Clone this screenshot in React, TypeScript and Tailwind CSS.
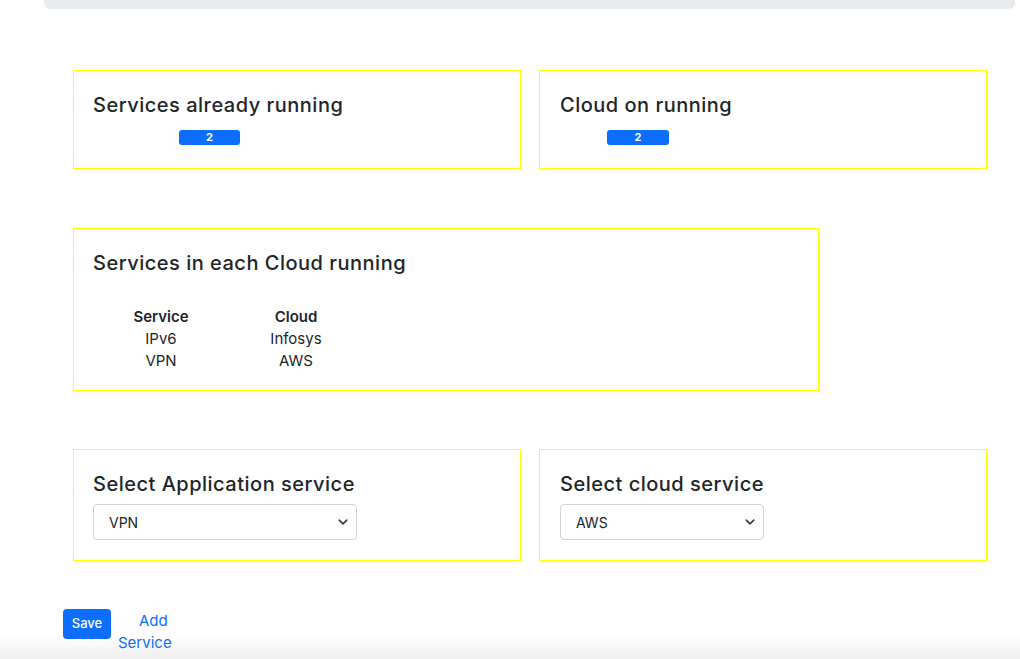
export default function App() {
  return (
    <div className="min-h-[659px] bg-[linear-gradient(to_bottom,#ffffff_636px,#efefef_659px)] font-['Inter','Liberation_Sans',sans-serif] text-[#212529]">
      <div className="ml-[44px] mr-[5px] h-[9px] rounded-b-[6px] bg-[#e9ecef]" />

      <div className="pl-[73px] pr-[33px] pt-[61px]">
        <div className="grid grid-cols-2 gap-[18px]">
          <div className="h-[99px] border border-[#ffff00] px-[19px] pt-[22px]">
            <h5 className="text-[20px] leading-[24px] font-medium tracking-[0.5px]">Services already running</h5>
            <div className="mt-[13px] ml-[86px] flex h-[15px] w-[61px] items-center justify-center rounded-[3px] bg-[#0d6efd] text-[11px] font-bold text-white">2</div>
          </div>
          <div className="h-[99px] border border-[#ffff00] px-[20px] pt-[22px]">
            <h5 className="text-[20px] leading-[24px] font-medium tracking-[0.5px]">Cloud on running</h5>
            <div className="mt-[13px] ml-[47px] flex h-[15px] w-[62px] items-center justify-center rounded-[3px] bg-[#0d6efd] text-[11px] font-bold text-white">2</div>
          </div>
        </div>

        <div className="mt-[59px] h-[163px] w-[746px] border border-[#ffff00] px-[19px] pt-[22px]">
          <h5 className="text-[20px] leading-[24px] font-medium tracking-[0.5px]">Services in each Cloud running</h5>
          <div className="mt-[31px] ml-[28px] grid grid-cols-[80px_190px] text-center text-[15px] leading-[22px]">
            <div className="font-semibold">Service</div>
            <div className="font-semibold">Cloud</div>
            <div>IPv6</div>
            <div>Infosys</div>
            <div>VPN</div>
            <div>AWS</div>
          </div>
        </div>

        <div className="mt-[58px] grid grid-cols-2 gap-[18px]">
          <div className="h-[112px] border border-[#ffff00] px-[19px] pt-[22px]">
            <h5 className="text-[20px] leading-[24px] font-medium tracking-[0.5px]">Select Application service</h5>
            <Select value="VPN" width="w-[264px]" />
          </div>
          <div className="h-[112px] border border-[#ffff00] px-[20px] pt-[22px]">
            <h5 className="text-[20px] leading-[24px] font-medium tracking-[0.5px]">Select cloud service</h5>
            <Select value="AWS" width="w-[204px]" />
          </div>
        </div>
      </div>

      <div className="mt-[48px] ml-[63px] flex items-start gap-[7px]">
        <button className="h-[30px] w-[48px] rounded-[4px] bg-[#0d6efd] text-[13px] font-medium text-white">Save</button>
        <a className="mt-[1px] block w-[52px] text-[15px] leading-[22px] text-[#0d6efd]">
          <span className="block pl-[21px]">Add</span>
          <span className="block">Service</span>
        </a>
      </div>
    </div>
  )
}

function Select({ value, width }: { value: string; width: string }) {
  return (
    <div className={`mt-[8px] flex h-[36px] items-center justify-between rounded-[4px] border border-[#ced4da] bg-white pl-[15px] pr-[8px] text-[14px] text-[#212529] ${width}`}>
      <span>{value}</span>
      <svg width="10" height="10" viewBox="0 0 16 16" fill="none" stroke="#343a40" strokeWidth="2.5" strokeLinecap="round" strokeLinejoin="round">
        <path d="M2 5l6 6 6-6" />
      </svg>
    </div>
  )
}
